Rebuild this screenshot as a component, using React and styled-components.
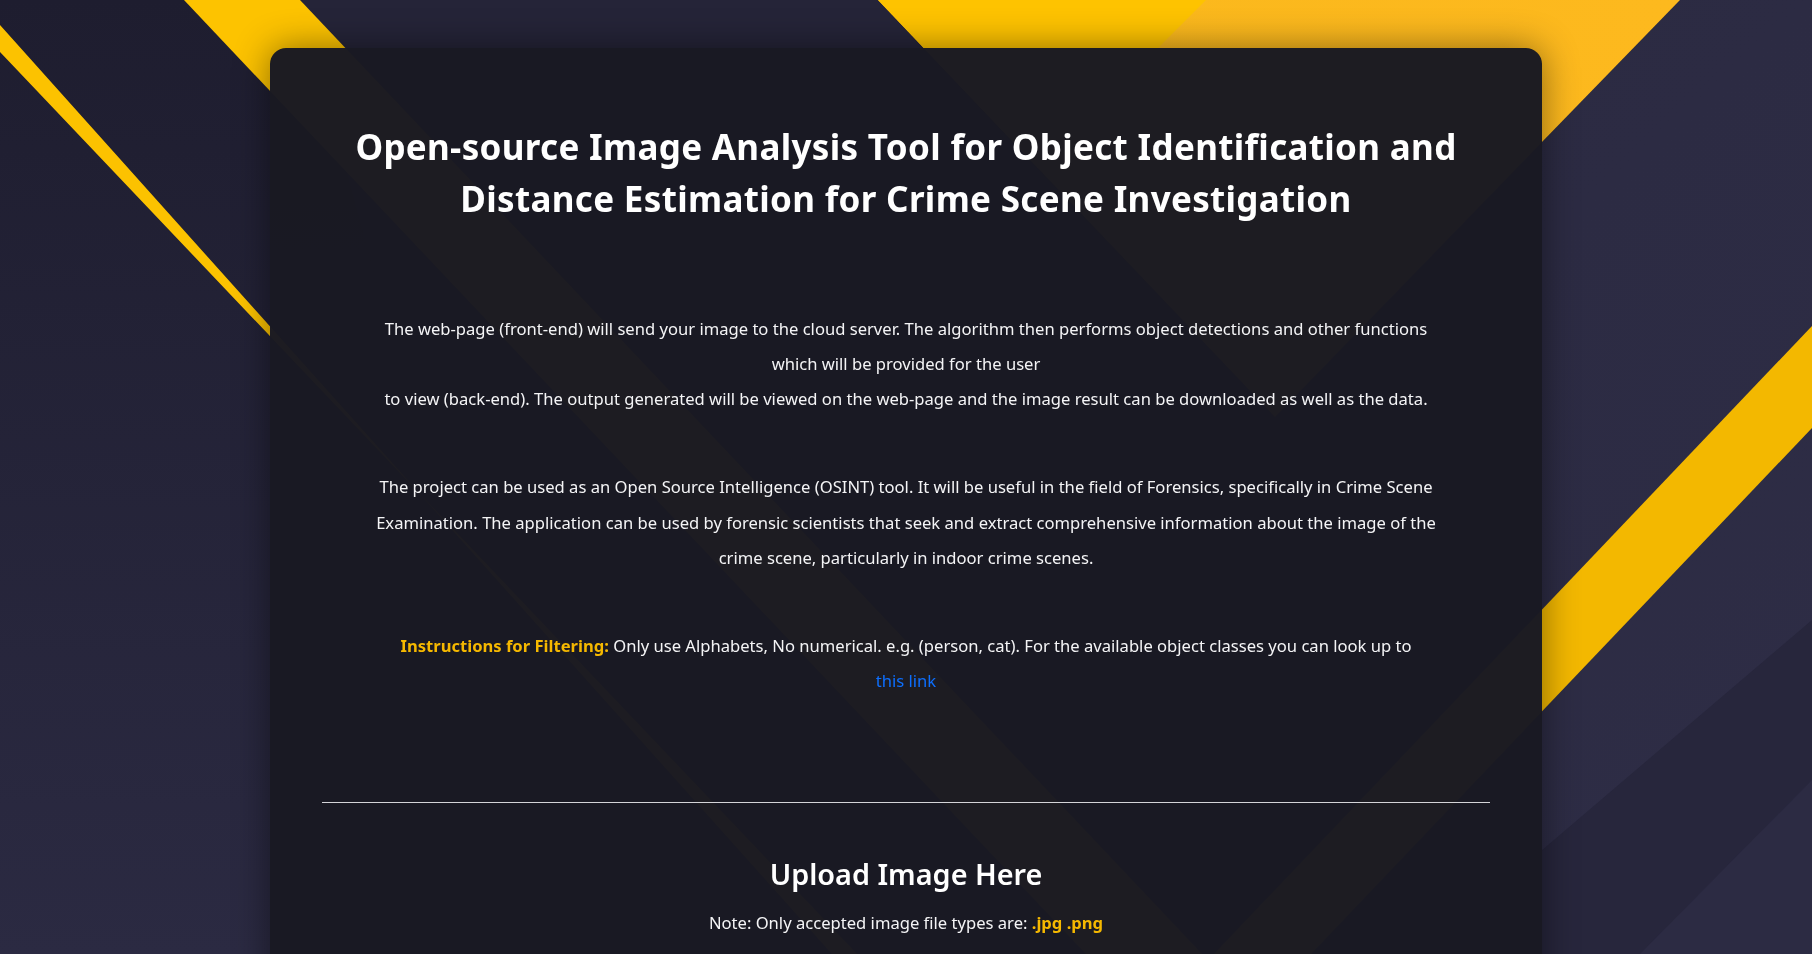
import React from "react";
import styled, { createGlobalStyle } from "styled-components";

const GlobalStyle = createGlobalStyle`
  html, body {
    margin: 0;
    padding: 0;
    background: #222135;
  }
  body {
    font-family: "Segoe UI", "Noto Sans", sans-serif;
    color: #f4f4f6;
  }
  * {
    box-sizing: border-box;
  }
`;

function Backdrop() {
  return (
    <BackdropSvg viewBox="0 0 1812 954" preserveAspectRatio="none" aria-hidden="true">
      <defs>
        <linearGradient id="bgFade" x1="0" y1="0" x2="0" y2="1">
          <stop offset="0" stopColor="#1e1d2f" />
          <stop offset="1" stopColor="#2b2a42" />
        </linearGradient>
        <linearGradient id="rightFade" x1="0" y1="0" x2="1" y2="1">
          <stop offset="0" stopColor="#2a2940" />
          <stop offset="1" stopColor="#2e2d46" />
        </linearGradient>
        <linearGradient id="warm" x1="0" y1="0" x2="1" y2="0">
          <stop offset="0" stopColor="#fab81c" />
          <stop offset="1" stopColor="#fdb91e" />
        </linearGradient>
      </defs>
      <rect x="0" y="0" width="1812" height="954" fill="url(#bgFade)" />
      <polygon points="300,0 878,0 1330,480 760,954 560,954" fill="#252438" />
      <polygon points="1680,0 1812,0 1812,954 754,954" fill="url(#rightFade)" />
      <polygon points="1812,620 1812,954 1420,954" fill="#27263c" />
      <polygon points="1812,780 1812,954 1640,954" fill="#2c2b43" />
      <polygon points="0,25 0,52 857,954 832,954" fill="#fcc200" />
      <polygon points="184,0 300,0 1202,954 1086,954" fill="#fdc300" />
      <polygon points="878,0 1680,0 1275,417" fill="url(#warm)" />
      <polygon points="878,0 1206,0 1038,168" fill="#fec300" />
      <polygon points="1812,326 1812,428 1311,954 1214,954" fill="#f3b800" />
    </BackdropSvg>
  );
}

export default function App() {
  return (
    <>
      <GlobalStyle />
      <Backdrop />
      <Page>
        <Card>
          <Title>
            Open-source Image Analysis Tool for Object Identification and
            Distance Estimation for Crime Scene Investigation
          </Title>

          <Intro>
            <Paragraph>
              The web-page (front-end) will send your image to the cloud server. The
              algorithm then performs object detections and other functions which will be
              provided for the user
              <br />
              to view (back-end). The output generated will be viewed on the web-page and
              the image result can be downloaded as well as the data.
            </Paragraph>
            <Paragraph>
              The project can be used as an Open Source Intelligence (OSINT) tool. It will
              be useful in the field of Forensics, specifically in Crime Scene Examination.
              The application can be used by forensic scientists that seek and extract
              comprehensive information about the image of the crime scene, particularly in
              indoor crime scenes.
            </Paragraph>
            <Paragraph>
              <Accent>Instructions for Filtering:</Accent> Only use Alphabets, No
              numerical. e.g. (person, cat). For the available object classes you can look
              up to <TextLink href="#classes">this link</TextLink>
            </Paragraph>
          </Intro>

          <Divider />

          <UploadSection>
            <UploadHeading>Upload Image Here</UploadHeading>
            <Note>
              Note: Only accepted image file types are: <Accent>.jpg .png</Accent>
            </Note>
          </UploadSection>
        </Card>
      </Page>
    </>
  );
}

const BackdropSvg = styled.svg`
  position: fixed;
  inset: 0;
  width: 100%;
  height: 100%;
  z-index: 0;
  display: block;
`;

const Page = styled.main`
  position: relative;
  z-index: 1;
  min-height: 100vh;
  padding-top: 48px;
`;

const Card = styled.section`
  width: 1272px;
  margin: 0 auto;
  padding: 73px 52px 140px;
  border-radius: 16px;
  background: rgba(25, 25, 35, 0.986);
  box-shadow: 0 0 36px rgba(0, 0, 0, 0.45);
`;

const Title = styled.h1`
  margin: 0;
  font-family: "Segoe UI", "Noto Sans", sans-serif;
  font-size: 35px;
  font-weight: 700;
  line-height: 52px;
  letter-spacing: 0.32px;
  text-align: center;
  color: #ffffff;
`;

const Intro = styled.div`
  display: flex;
  flex-direction: column;
  gap: 52.8px;
  padding: 86px 49px 104px;
`;

const Paragraph = styled.p`
  margin: 0;
  font-size: 16.6px;
  line-height: 35.2px;
  text-align: center;
  color: #f4f4f6;
`;

const Accent = styled.strong`
  font-weight: 700;
  color: #f5b800;
`;

const TextLink = styled.a`
  display: inline-block;
  color: #0d6efd;
  text-decoration: none;
`;

const Divider = styled.hr`
  margin: 0;
  height: 1px;
  border: none;
  background: #d4d4d8;
`;

const UploadSection = styled.div`
  display: flex;
  flex-direction: column;
  align-items: center;
  gap: 13px;
  padding-top: 54px;
`;

const UploadHeading = styled.h2`
  margin: 0;
  font-size: 28.8px;
  font-weight: 600;
  line-height: 34.5px;
  color: #ffffff;
`;

const Note = styled.p`
  margin: 0;
  font-size: 16.6px;
  line-height: 35.2px;
  color: #f4f4f6;
`;
